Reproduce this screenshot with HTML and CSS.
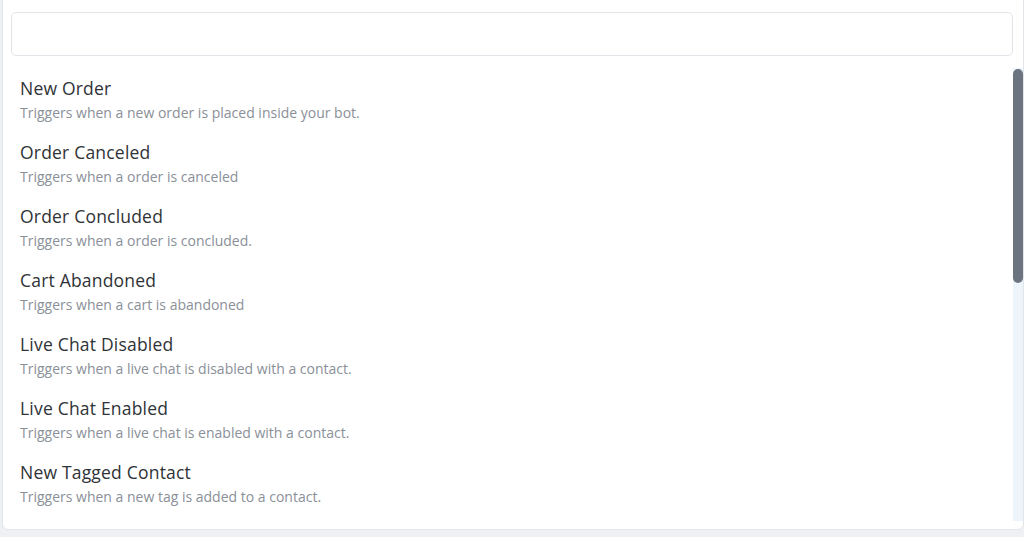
FILE: index.html
```html
<!DOCTYPE html>
<html>
<head>
<meta charset="utf-8">
<link rel="stylesheet" href="styles.css">
</head>
<body>
<div class="page">
  <div class="panel">
    <div class="search-wrap">
      <input class="search" type="text">
    </div>
    <div class="list-wrap">
      <ul class="list">
        <li class="item"><div class="title">New Order</div><div class="desc">Triggers when a new order is placed inside your bot.</div></li>
        <li class="item"><div class="title">Order Canceled</div><div class="desc">Triggers when a order is canceled</div></li>
        <li class="item"><div class="title">Order Concluded</div><div class="desc">Triggers when a order is concluded.</div></li>
        <li class="item"><div class="title">Cart Abandoned</div><div class="desc">Triggers when a cart is abandoned</div></li>
        <li class="item"><div class="title">Live Chat Disabled</div><div class="desc">Triggers when a live chat is disabled with a contact.</div></li>
        <li class="item"><div class="title">Live Chat Enabled</div><div class="desc">Triggers when a live chat is enabled with a contact.</div></li>
        <li class="item"><div class="title">New Tagged Contact</div><div class="desc">Triggers when a new tag is added to a contact.</div></li>
      </ul>
      <div class="scrollbar"><div class="thumb"></div></div>
    </div>
  </div>
</div>
</body>
</html>
```
FILE: styles.css
```css
html, body {
  margin: 0;
  padding: 0;
  height: 100%;
  overflow: hidden;
}
body {
  background: #eef0f3;
  font-family: "Open Sans", "Lato", sans-serif;
}
.page {
  padding-left: 2px;
}
.panel {
  box-sizing: border-box;
  height: 531px;
  margin-top: -1px;
  background: #ffffff;
  border: 1px solid #e2e5e9;
  border-radius: 0 0 6px 6px;
  padding: 12px 0 8px 0;
  display: flex;
  flex-direction: column;
}
.search-wrap {
  padding: 0 10px 0 8px;
}
.search {
  display: block;
  box-sizing: border-box;
  width: 100%;
  height: 44px;
  border: 1px solid #e1e4e8;
  border-radius: 5px;
  background: #fff;
  outline: none;
}
.list-wrap {
  position: relative;
  margin-top: 12px;
  height: 454px;
  overflow: hidden;
}
.list {
  list-style: none;
  margin: 0;
  padding: 0;
}
.scrollbar {
  position: absolute;
  top: 0;
  right: 0;
  width: 10px;
  height: 100%;
  background: #eef4fc;
}
.thumb {
  width: 10px;
  height: 214px;
  margin-top: 1px;
  background: #6b7480;
  border-radius: 5px;
}
.item {
  padding: 8px 17px;
  height: 64px;
  box-sizing: border-box;
}
.title {
  font-size: 17.5px;
  letter-spacing: 0.2px;
  line-height: 24px;
  color: #2f3337;
}
.desc {
  padding-top: 1px;
  font-size: 14px;
  line-height: 24px;
  color: #8a9098;
}
```
